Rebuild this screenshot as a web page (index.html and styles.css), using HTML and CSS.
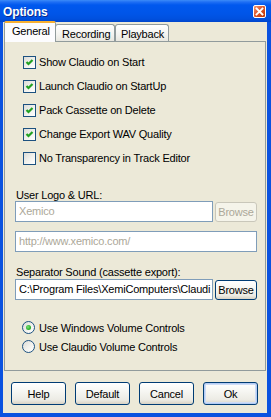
FILE: index.html
```html
<!DOCTYPE html>
<html>
<head>
<meta charset="utf-8">
<title>Options</title>
<link rel="stylesheet" href="styles.css">
</head>
<body>
<div class="window">
  <div class="titlebar">
    <span class="title">Options</span>
    <span class="close">
      <svg width="13" height="13" viewBox="0 0 13 13">
        <path d="M3.5 3.5 L9.5 9.5 M9.5 3.5 L3.5 9.5" stroke="#fff" stroke-width="1.8" stroke-linecap="square"/>
      </svg>
    </span>
  </div>
  <div class="client">
    <div class="tabs">
      <div class="tab active">General</div>
      <div class="tab t-rec">Recording</div>
      <div class="tab t-play">Playback</div>
    </div>
    <div class="panel">
      <div class="checks">
        <div class="check"><span class="box"><svg width="11" height="11" viewBox="0 0 11 11"><path d="M2.5 5 L4.5 7 L8.5 3" fill="none" stroke="#21A121" stroke-width="2.2"/></svg></span>Show Claudio on Start</div>
        <div class="check"><span class="box"><svg width="11" height="11" viewBox="0 0 11 11"><path d="M2.5 5 L4.5 7 L8.5 3" fill="none" stroke="#21A121" stroke-width="2.2"/></svg></span>Launch Claudio on StartUp</div>
        <div class="check"><span class="box"><svg width="11" height="11" viewBox="0 0 11 11"><path d="M2.5 5 L4.5 7 L8.5 3" fill="none" stroke="#21A121" stroke-width="2.2"/></svg></span>Pack Cassette on Delete</div>
        <div class="check"><span class="box"><svg width="11" height="11" viewBox="0 0 11 11"><path d="M2.5 5 L4.5 7 L8.5 3" fill="none" stroke="#21A121" stroke-width="2.2"/></svg></span>Change Export WAV Quality</div>
        <div class="check"><span class="box"></span>No Transparency in Track Editor</div>
      </div>

      <div class="field-label label-logo">User Logo &amp; URL:</div>
      <div class="field-row">
        <div class="input disabled">Xemico</div>
        <div class="btn browse disabled-btn">Browse</div>
      </div>
      <div class="input disabled wide">http://www.xemico.com/</div>

      <div class="field-label label-sep">Separator Sound (cassette export):</div>
      <div class="field-row">
        <div class="input">C:\Program Files\XemiComputers\Claudi</div>
        <div class="btn browse">Browse</div>
      </div>

      <div class="radios">
        <div class="radio-row"><span class="radio on"><span class="dot"></span></span>Use Windows Volume Controls</div>
        <div class="radio-row"><span class="radio"></span>Use Claudio Volume Controls</div>
      </div>
    </div>
    <div class="buttons">
      <div class="btn big">Help</div>
      <div class="btn big">Default</div>
      <div class="btn big">Cancel</div>
      <div class="btn big default">Ok</div>
    </div>
  </div>
</div>
</body>
</html>
```
FILE: styles.css
```css
* { box-sizing: border-box; }
html, body {
  margin: 0;
  padding: 0;
  background: #0054E3;
}
body {
  font-family: "Liberation Sans", Arial, sans-serif;
  font-size: 11px;
  letter-spacing: -0.2px;
  color: #000;
}
.window {
  width: 271px;
  height: 417px;
  display: flex;
  flex-direction: column;
  background: #0A52E0;
}
.titlebar {
  height: 22px;
  flex: none;
  display: flex;
  align-items: center;
  justify-content: space-between;
  padding: 0 5px 0 3px;
  background: linear-gradient(#3C8CF8 0px, #1F6FF4 2px, #0058EE 5px, #0055E8 14px, #0050DE 19px, #0045CC 22px);
}
.title {
  color: #fff;
  font-weight: bold;
  font-size: 12px;
  letter-spacing: -0.1px;
  text-shadow: 1px 1px 0 #0B2A8E;
  margin-top: 1px;
}
.close {
  width: 13px;
  height: 13px;
  border: 1px solid #fff;
  border-radius: 2px;
  background: linear-gradient(135deg, #F09A78 0%, #E0643C 35%, #CC4416 75%, #B8360A 100%);
  display: flex;
  align-items: center;
  justify-content: center;
  margin-top: 1px;
}
.close svg { display: block; margin: -1px; }
.client {
  flex: 1;
  margin: 0 4px 4px 3px;
  background: #ECE9D8;
  padding: 0 0 0 1px;
  display: flex;
  flex-direction: column;
}
.tabs {
  display: flex;
  align-items: flex-end;
  height: 19px;
  position: relative;
  z-index: 2;
}
.tab {
  height: 17px;
  border: 1px solid #919B9C;
  border-bottom: none;
  border-radius: 3px 3px 0 0;
  background: linear-gradient(#FFFFFF, #F3F3EF 60%, #E8E7DF);
  padding: 3px 0 0 6px;
  line-height: 12px;
  margin-bottom: 0;
}
.tab.active {
  height: 21px;
  width: 52px;
  margin-bottom: -1px;
  background: #FCFCFE;
  border-top: 2px solid #FFC83C;
  border-color: #919B9C;
  border-top-color: #F8B030;
  padding: 2px 0 0 7px;
  border-radius: 2px 2px 0 0;
}
.t-rec { width: 60px; margin-left: -1px; padding-left: 6px; }
.t-play { width: 54px; margin-left: 0; padding-left: 5px; }
.panel {
  height: 330px;
  margin-right: 1px;
  border: 1px solid #919B9C;
  background: #ECE9D8;
  padding: 14px 8px 0 10px;
  flex: none;
}
.checks {
  display: flex;
  flex-direction: column;
  gap: 11px;
  padding-left: 8px;
}
.check {
  display: flex;
  align-items: center;
  height: 13px;
  line-height: 13px;
  white-space: nowrap;
}
.box {
  width: 13px;
  height: 13px;
  border: 1px solid #1C5180;
  background: linear-gradient(135deg, #DCDCD7 0%, #F2F2EE 55%, #FFFFFF 100%);
  margin-right: 3px;
  flex: none;
  display: flex;
}
.box svg { display: block; }
.field-label {
  line-height: 12px;
  height: 12px;
  padding-left: 1px;
  white-space: nowrap;
}
.label-logo { margin-top: 24px; }
.label-sep { margin-top: 14px; margin-bottom: 1px; }
.field-row {
  display: flex;
  align-items: center;
  gap: 2px;
}
.input {
  width: 198px;
  height: 21px;
  border: 1px solid #7F9DB9;
  background: #fff;
  padding: 0 0 0 3px;
  line-height: 19px;
  white-space: nowrap;
  overflow: hidden;
  flex: none;
}
.input.disabled { color: #ACA899; }
.input.wide { width: 242px; margin-top: 9px; }
.btn {
  border: 1px solid #003C74;
  border-radius: 3px;
  background: linear-gradient(#FFFFFF 0%, #F6F6F2 40%, #ECEBE4 80%, #D8D2C4 100%);
  display: flex;
  align-items: center;
  justify-content: center;
  white-space: nowrap;
  flex: none;
}
.browse {
  width: 42px;
  height: 20px;
}
.disabled-btn {
  border-color: #C9C7BA;
  background: #F5F4EA;
  color: #ACA899;
}
.radios {
  margin-top: 21px;
  padding-left: 7px;
  display: flex;
  flex-direction: column;
  gap: 6px;
}
.radio-row {
  display: flex;
  align-items: center;
  height: 13px;
  white-space: nowrap;
}
.radio {
  width: 13px;
  height: 13px;
  border-radius: 50%;
  border: 1px solid #1C5180;
  background: linear-gradient(135deg, #DCDCD7 0%, #F2F2EE 55%, #FFFFFF 100%);
  margin-right: 4px;
  flex: none;
  display: flex;
  align-items: center;
  justify-content: center;
}
.dot {
  width: 5px;
  height: 5px;
  border-radius: 50%;
  background: radial-gradient(circle at 40% 40%, #7BE27A 0%, #2BB12A 60%, #1C8E1C 100%);
}
.buttons {
  display: flex;
  justify-content: center;
  gap: 9px;
  margin-top: 11px;
  padding-right: 2px;
}
.btn.big {
  width: 55px;
  height: 23px;
}
.btn.default {
  box-shadow: inset 0 0 0 1px #B4CCF4, inset 0 0 0 2px #CEDCF6;
}
```
